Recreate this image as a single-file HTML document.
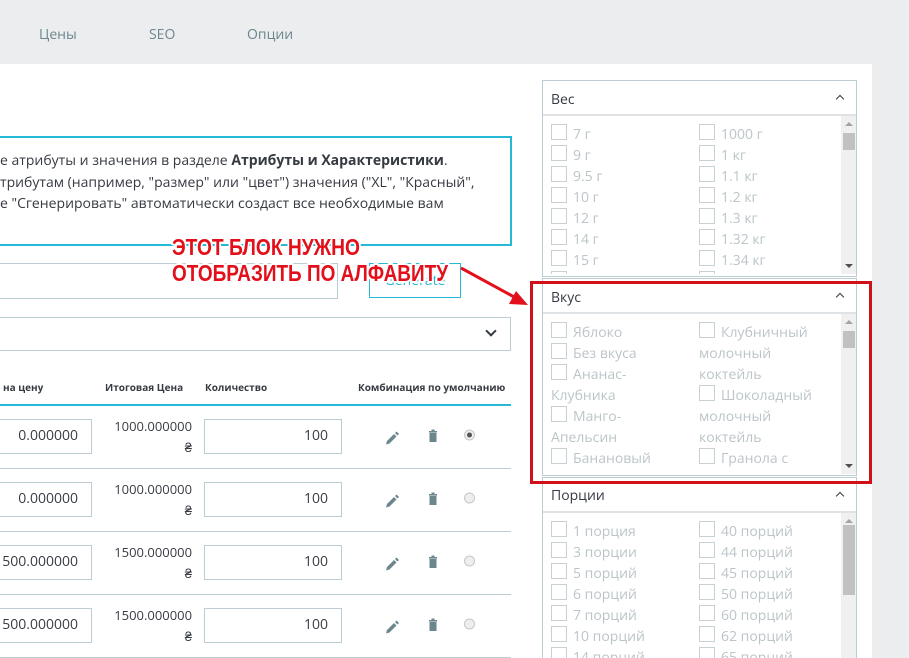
<!DOCTYPE html>
<html><head><meta charset="utf-8"><style>
*{box-sizing:border-box;margin:0;padding:0}
html,body{width:909px;height:658px;overflow:hidden}
body{background:#ebedef;font-family:"Open Sans","Liberation Sans","DejaVu Sans",sans-serif;position:relative;color:#363a41}
.a{position:absolute}
.tab{top:25px;font-size:14px;color:#6c868e}
.main{left:0;top:64px;width:872px;height:594px;background:#fff}
.info{left:-3px;top:136px;width:515px;height:110px;border:2px solid #25b9d7;border-left:none}
.info p{position:absolute;left:3px;font-size:14px;color:#363a41;white-space:nowrap}
.inp{border:1px solid #bbcdd2;background:#fff}
.th{top:380px;font-size:10px;font-weight:bold;color:#363a41;white-space:nowrap}
.num{font-size:14px;text-align:right;padding-right:13px;line-height:32px;color:#363a41}
.price{font-size:13px;text-align:right;line-height:21px;color:#363a41;width:100px}
.hr{left:0;width:511px;height:1px;background:#bbcdd2}
.panel{left:542px;width:315px;border:1px solid #bbcdd2;background:#fff;overflow:hidden}
.ph{height:35px;border-bottom:2px solid #dfe3e5;font-size:14px;padding:9px 0 0 8px;color:#363a41;position:relative}
.ph:after{content:"";position:absolute;right:13px;top:15px;width:5px;height:5px;border-left:1.5px solid #363a41;border-top:1.5px solid #363a41;transform:rotate(45deg)}
.pb{position:relative;overflow:hidden}
.cb{position:absolute;width:16px;height:16px;border:1px solid #c7d1d4;background:#fff}
.lb{position:absolute;font-size:14px;color:#bbc5c8;white-space:nowrap}
.sb{position:absolute;right:0;top:0;width:15px;background:#f0f0f0;bottom:0}
.sb i{position:absolute;left:2px;width:12px;background:#c1c1c1}
.ua,.da{position:absolute;left:4px;width:0;height:0;border-left:4px solid transparent;border-right:4px solid transparent}
.ua{top:6px;border-bottom:4px solid #a3a3a3}
.da{bottom:6px;border-top:4px solid #505050}
</style></head><body>
<div class="a tab" style="left:39px">Цены</div>
<div class="a tab" style="left:149px">SEO</div>
<div class="a tab" style="left:247px">Опции</div>
<div class="a main"></div>

<div class="a info">
<p style="top:13px">е атрибуты и значения в разделе <b>Атрибуты и Характеристики</b>.</p>
<p style="top:35px">трибутам (например, "размер" или "цвет") значения ("XL", "Красный",</p>
<p style="top:56px">е "Сгенерировать" автоматически создаст все необходимые вам</p>
</div>

<div class="a inp" style="left:-2px;top:263px;width:340px;height:36px"></div>
<div class="a" style="left:369px;top:263px;width:92px;height:35px;border:1px solid #25b9d7;color:#25b9d7;font-size:14px;text-align:center;line-height:33px">Generate</div>
<div class="a inp" style="left:-2px;top:317px;width:513px;height:34px"></div>
<div class="a" style="left:487px;top:327px;width:8px;height:8px;border-right:2px solid #363a41;border-bottom:2px solid #363a41;transform:rotate(45deg)"></div>

<div class="a th" style="left:3px">на цену</div>
<div class="a th" style="left:105px">Итоговая Цена</div>
<div class="a th" style="left:205px">Количество</div>
<div class="a th" style="left:358px">Комбинация по умолчанию</div>
<div class="a" style="left:0;top:404px;width:511px;height:2px;background:#25b9d7"></div>

<div class="a" style="left:0;top:419px">
<div class="a inp num" style="left:-2px;top:0;width:94px;height:35px">0.000000</div>
<div class="a price" style="left:92px;top:-3px">1000.000000<br>₴</div>
<div class="a inp num" style="left:204px;top:0;width:138px;height:35px">100</div>
</div>
<div class="a hr" style="top:468px"></div>
<div class="a" style="left:0;top:482px">
<div class="a inp num" style="left:-2px;top:0;width:94px;height:35px">0.000000</div>
<div class="a price" style="left:92px;top:-3px">1000.000000<br>₴</div>
<div class="a inp num" style="left:204px;top:0;width:138px;height:35px">100</div>
</div>
<div class="a hr" style="top:531px"></div>
<div class="a" style="left:0;top:545px">
<div class="a inp num" style="left:-2px;top:0;width:94px;height:35px">500.000000</div>
<div class="a price" style="left:92px;top:-3px">1500.000000<br>₴</div>
<div class="a inp num" style="left:204px;top:0;width:138px;height:35px">100</div>
</div>
<div class="a hr" style="top:594px"></div>
<div class="a" style="left:0;top:608px">
<div class="a inp num" style="left:-2px;top:0;width:94px;height:35px">500.000000</div>
<div class="a price" style="left:92px;top:-3px">1500.000000<br>₴</div>
<div class="a inp num" style="left:204px;top:0;width:138px;height:35px">100</div>
</div>
<div class="a hr" style="top:657px"></div>

<svg class="a" style="left:0;top:0" width="909" height="658">
<g fill="#6c868e">
<g id="ic"><path d="M387 441l7-7 2.5 2.5-7 7-3.5 1z"/><path d="M395 433l1.5-1.5 2.5 2.5-1.5 1.5z"/><rect x="429" y="431" width="8" height="1.6"/><rect x="431.5" y="429.5" width="3" height="2"/><rect x="429.5" y="433" width="7" height="9"/></g>
<use href="#ic" y="63"/><use href="#ic" y="126"/><use href="#ic" y="189"/>
</g>
<g fill="#eee" stroke="#c7c7c7">
<circle cx="469.5" cy="435" r="5"/><circle cx="469.5" cy="498" r="5"/><circle cx="469.5" cy="561" r="5"/><circle cx="469.5" cy="624" r="5"/>
</g>
<circle cx="469.5" cy="435" r="2.5" fill="#555"/>
</svg>

<div class="a panel" style="top:80px;height:197px">
<div class="ph">Вес</div>
<div class="pb" style="height:158px">
<div class="sb"><div class="ua"></div><i style="top:17px;height:17px"></i><div class="da"></div></div>
<div class="cb" style="left:8px;top:8px"></div><div class="lb" style="left:30px;top:9px">7 г</div>
<div class="cb" style="left:8px;top:29px"></div><div class="lb" style="left:30px;top:30px">9 г</div>
<div class="cb" style="left:8px;top:50px"></div><div class="lb" style="left:30px;top:51px">9.5 г</div>
<div class="cb" style="left:8px;top:71px"></div><div class="lb" style="left:30px;top:72px">10 г</div>
<div class="cb" style="left:8px;top:92px"></div><div class="lb" style="left:30px;top:93px">12 г</div>
<div class="cb" style="left:8px;top:113px"></div><div class="lb" style="left:30px;top:114px">14 г</div>
<div class="cb" style="left:8px;top:134px"></div><div class="lb" style="left:30px;top:135px">15 г</div>
<div class="cb" style="left:8px;top:155px"></div>
<div class="cb" style="left:156px;top:8px"></div><div class="lb" style="left:178px;top:9px">1000 г</div>
<div class="cb" style="left:156px;top:29px"></div><div class="lb" style="left:178px;top:30px">1 кг</div>
<div class="cb" style="left:156px;top:50px"></div><div class="lb" style="left:178px;top:51px">1.1 кг</div>
<div class="cb" style="left:156px;top:71px"></div><div class="lb" style="left:178px;top:72px">1.2 кг</div>
<div class="cb" style="left:156px;top:92px"></div><div class="lb" style="left:178px;top:93px">1.3 кг</div>
<div class="cb" style="left:156px;top:113px"></div><div class="lb" style="left:178px;top:114px">1.32 кг</div>
<div class="cb" style="left:156px;top:134px"></div><div class="lb" style="left:178px;top:135px">1.34 кг</div>
<div class="cb" style="left:156px;top:155px"></div>
</div></div>

<div class="a panel" style="top:278px;height:198px">
<div class="ph" style="padding-top:9px">Вкус</div>
<div class="pb" style="height:160px">
<div class="sb"><div class="ua"></div><i style="top:17px;height:17px"></i><div class="da"></div></div>
<div class="cb" style="left:8px;top:8px"></div><div class="lb" style="left:30px;top:9px">Яблоко</div>
<div class="cb" style="left:8px;top:29px"></div><div class="lb" style="left:30px;top:30px">Без вкуса</div>
<div class="cb" style="left:8px;top:50px"></div><div class="lb" style="left:30px;top:51px">Ананас-</div>
<div class="lb" style="left:8px;top:72px">Клубника</div>
<div class="cb" style="left:8px;top:92px"></div><div class="lb" style="left:30px;top:93px">Манго-</div>
<div class="lb" style="left:8px;top:114px">Апельсин</div>
<div class="cb" style="left:8px;top:134px"></div><div class="lb" style="left:30px;top:135px">Банановый</div>
<div class="cb" style="left:156px;top:8px"></div><div class="lb" style="left:178px;top:9px">Клубничный</div>
<div class="lb" style="left:156px;top:30px">молочный</div>
<div class="lb" style="left:156px;top:51px">коктейль</div>
<div class="cb" style="left:156px;top:71px"></div><div class="lb" style="left:178px;top:72px">Шоколадный</div>
<div class="lb" style="left:156px;top:93px">молочный</div>
<div class="lb" style="left:156px;top:114px">коктейль</div>
<div class="cb" style="left:156px;top:134px"></div><div class="lb" style="left:178px;top:135px">Гранола с</div>
</div></div>

<div class="a panel" style="top:477px;height:181px;border-bottom:none">
<div class="ph" style="padding-top:8px">Порции</div>
<div class="pb" style="height:160px">
<div class="sb"><div class="ua"></div><i style="top:12px;height:70px"></i></div>
<div class="cb" style="left:8px;top:8px"></div><div class="lb" style="left:30px;top:9px">1 порция</div>
<div class="cb" style="left:8px;top:29px"></div><div class="lb" style="left:30px;top:30px">3 порции</div>
<div class="cb" style="left:8px;top:50px"></div><div class="lb" style="left:30px;top:51px">5 порций</div>
<div class="cb" style="left:8px;top:71px"></div><div class="lb" style="left:30px;top:72px">6 порций</div>
<div class="cb" style="left:8px;top:92px"></div><div class="lb" style="left:30px;top:93px">7 порций</div>
<div class="cb" style="left:8px;top:113px"></div><div class="lb" style="left:30px;top:114px">10 порций</div>
<div class="cb" style="left:8px;top:134px"></div><div class="lb" style="left:30px;top:135px">14 порций</div>
<div class="cb" style="left:156px;top:8px"></div><div class="lb" style="left:178px;top:9px">40 порций</div>
<div class="cb" style="left:156px;top:29px"></div><div class="lb" style="left:178px;top:30px">44 порций</div>
<div class="cb" style="left:156px;top:50px"></div><div class="lb" style="left:178px;top:51px">45 порций</div>
<div class="cb" style="left:156px;top:71px"></div><div class="lb" style="left:178px;top:72px">50 порций</div>
<div class="cb" style="left:156px;top:92px"></div><div class="lb" style="left:178px;top:93px">60 порций</div>
<div class="cb" style="left:156px;top:113px"></div><div class="lb" style="left:178px;top:114px">62 порций</div>
<div class="cb" style="left:156px;top:134px"></div><div class="lb" style="left:178px;top:135px">65 порций</div>
</div></div>

<div class="a" style="left:530px;top:281px;width:342px;height:203px;border:3px solid #d0111b"></div>

<svg class="a" style="left:0;top:0" width="909" height="658">
<g font-family="Liberation Sans, sans-serif" font-weight="bold" font-size="23" fill="#e3101b" stroke="#fff" stroke-width="4" paint-order="stroke" stroke-linejoin="round">
<text x="172" y="255" textLength="188" lengthAdjust="spacingAndGlyphs">ЭТОТ БЛОК НУЖНО</text>
<text x="172" y="281" textLength="276" lengthAdjust="spacingAndGlyphs">ОТОБРАЗИТЬ ПО АЛФАВИТУ</text>
</g>
<line x1="461" y1="268" x2="516" y2="298" stroke="#e3101b" stroke-width="3"/>
<path d="M528 305l-19-1 7-13z" fill="#e3101b"/>
</svg>
</body></html>
